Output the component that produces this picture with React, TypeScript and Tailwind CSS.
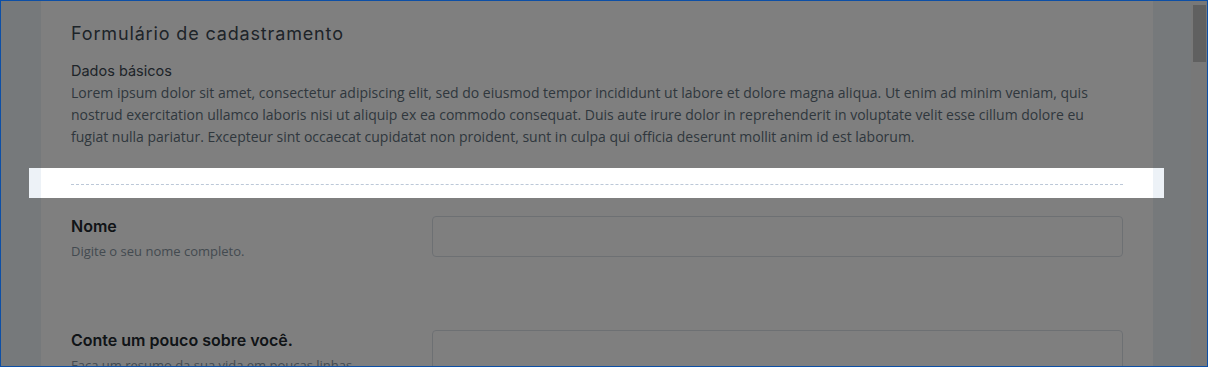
const headingFont = { fontFamily: "Inter, 'Noto Sans', sans-serif" };

interface FieldRowProps {
    label: string;
    hint: string;
}

const FieldRow = ({ label, hint }: FieldRowProps) => (
    <div className="flex items-start">
        <div className="w-[361px] shrink-0">
            <h3 className="text-[16px] leading-[20px] font-semibold text-[#22292f]" style={headingFont}>{label}</h3>
            <p className="mt-[5px] text-[13px] leading-[20px] text-[#8795a1] font-['Open_Sans',sans-serif]">{hint}</p>
        </div>
        <input type="text" className="flex-1 h-[41px] rounded border border-[#dae1e7] bg-white outline-none" />
    </div>
)

const Scrollbar = () => (
    <div className="w-[16px] shrink-0 bg-[#f1f1f1] pt-[4px] pl-[2px] pr-[1px]">
        <div className="h-[57px] bg-[#c1c1c1]"></div>
    </div>
)

const App = () => {
    return (
        <div className="w-[1208px] h-[367px] border border-[#0d4fa6] overflow-hidden relative bg-[#edf2f7]">
            <div className="flex h-full">
                <div className="flex-1 pl-[40px] pr-[38px]">
                    <div className="bg-white h-full px-[30px] pt-[21px]">
                        <h1 className="text-[18px] leading-[24px] tracking-[0.85px] text-[#3d4852]" style={headingFont}>Formulário de cadastramento</h1>

                        <h2 className="mt-[15px] text-[14.5px] leading-[20px] text-[#3d4852]" style={headingFont}>Dados básicos</h2>
                        <p className="mt-px text-[14px] leading-[22px] text-[#606f7b] font-['Open_Sans',sans-serif]">
                            Lorem ipsum dolor sit amet, consectetur adipiscing elit, sed do eiusmod tempor incididunt ut labore et dolore magna aliqua. Ut enim ad minim veniam, quis nostrud exercitation ullamco laboris nisi ut aliquip ex ea commodo consequat. Duis aute irure dolor in reprehenderit in voluptate velit esse cillum dolore eu fugiat nulla pariatur. Excepteur sint occaecat cupidatat non proident, sunt in culpa qui officia deserunt mollit anim id est laborum.
                        </p>

                        <hr className="mt-[36px] border-0 border-t border-dashed border-[#bcc8d8]" />

                        <div className="mt-[31px] flex flex-col gap-[69px]">
                            <FieldRow label="Nome" hint="Digite o seu nome completo." />
                            <FieldRow label="Conte um pouco sobre você." hint="Faça um resumo da sua vida em poucas linhas." />
                        </div>
                    </div>
                </div>
                <Scrollbar />
            </div>

            {/* tour overlay, the hole shows the divider */}
            <div className="absolute left-[28px] top-[167px] w-[1135px] h-[30px] shadow-[0_0_0_2000px_rgba(0,0,0,0.5)] pointer-events-none"></div>
        </div>
    );
}

export default App;
